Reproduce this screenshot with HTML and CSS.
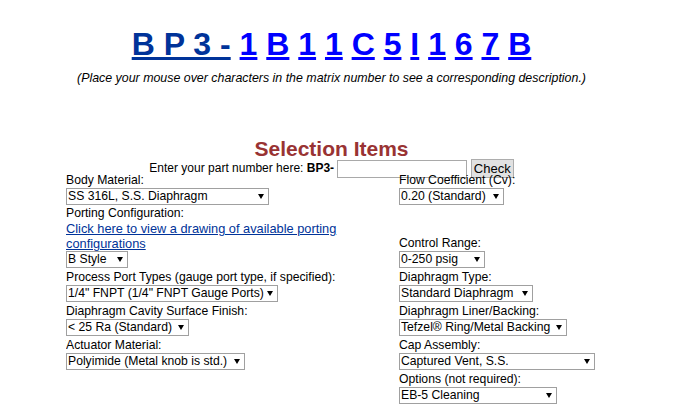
FILE: index.html
```html
<!DOCTYPE html>
<html>

	<head>
		<title>BP3 Series - Matrix Number</title>
		<link rel="stylesheet" href="styles.css">
	</head>

	<body>
		<div class="page">

			<div class="matrix">
				<span class="prefix">B P 3 -</span>
				<a href="#">1</a>
				<a href="#">B</a>
				<a href="#">1</a>
				<a href="#">1</a>
				<a href="#">C</a>
				<a href="#">5</a>
				<a href="#">I</a>
				<a href="#">1</a>
				<a href="#">6</a>
				<a href="#">7</a>
				<a href="#">B</a>
			</div>
			<p class="hint">(Place your mouse over characters in the matrix number to see a corresponding description.)</p>

			<h2 class="title">Selection Items</h2>
			<div class="lookup">
				Enter your part number here: <b>BP3-</b> <input type="text" class="part"> <input type="button" class="check" value="Check">
			</div>

			<table class="opts">
				<tr class="first">
					<td class="left">
						<div class="lbl">Body Material:</div>
						<span class="sel w-body"><select><option>SS 316L, S.S. Diaphragm</option><option>SS 316L, Elgiloy Diaphragm</option></select></span>
					</td>
					<td>
						<div class="lbl">Flow Coefficient (Cv):</div>
						<span class="sel w-flow"><select><option>0.20 (Standard)</option><option>0.06</option></select></span>
					</td>
				</tr>
				<tr>
					<td class="left">
						<div class="lbl">Porting Configuration:</div>
						<div class="lbl drawing"><a href="#">Click here to view a drawing of available porting configurations</a></div>
						<span class="sel w-port"><select><option>B Style</option><option>A Style</option></select></span>
					</td>
					<td class="bottom">
						<div class="lbl">Control Range:</div>
						<span class="sel w-range"><select><option>0-250 psig</option><option>0-100 psig</option></select></span>
					</td>
				</tr>
				<tr>
					<td class="left">
						<div class="lbl">Process Port Types (gauge port type, if specified):</div>
						<span class="sel w-proc"><select><option>1/4" FNPT (1/4" FNPT Gauge Ports)</option></select></span>
					</td>
					<td>
						<div class="lbl">Diaphragm Type:</div>
						<span class="sel w-dtype"><select><option>Standard Diaphragm</option></select></span>
					</td>
				</tr>
				<tr>
					<td class="left">
						<div class="lbl">Diaphragm Cavity Surface Finish:</div>
						<span class="sel w-cav"><select><option>&lt; 25 Ra (Standard)</option></select></span>
					</td>
					<td>
						<div class="lbl">Diaphragm Liner/Backing:</div>
						<span class="sel w-liner"><select><option>Tefzel&reg; Ring/Metal Backing</option></select></span>
					</td>
				</tr>
				<tr>
					<td class="left">
						<div class="lbl">Actuator Material:</div>
						<span class="sel w-act"><select><option>Polyimide (Metal knob is std.)</option></select></span>
					</td>
					<td>
						<div class="lbl">Cap Assembly:</div>
						<span class="sel w-cap"><select><option>Captured Vent, S.S.</option></select></span>
					</td>
				</tr>
				<tr>
					<td class="left"></td>
					<td>
						<div class="lbl">Options (not required):</div>
						<span class="sel w-opt"><select><option>EB-5 Cleaning</option><option>None</option></select></span>
					</td>
				</tr>
			</table>

		</div>
	</body>

</html>
```

FILE: styles.css
```css
body {
	margin: 8px;
	font-family: "Liberation Sans", Arial, sans-serif;
	font-size: 12.2px;
	color: #000000;
}

.page {
	width: 647px;
}

.matrix {
	margin-top: 18px;
	text-align: center;
	font-size: 32px;
	font-weight: bold;
	line-height: 37px;
}

.prefix {
	color: #003399;
	text-decoration: underline;
}

.matrix a {
	color: #0000ff;
}

p.hint {
	margin: 8px 0 0 0;
	text-align: center;
	font-style: italic;
	font-size: 12.4px;
	line-height: 14px;
}

h2.title {
	margin: 54px 0 0 0;
	color: #993333;
	text-align: center;
	font-size: 21px;
	line-height: 20px;
}

.lookup {
	height: 14px;
	text-align: center;
	font-size: 12px;
	line-height: 18px;
}

input.part {
	box-sizing: border-box;
	width: 130px;
	height: 18px;
	margin: 0;
	padding: 0 2px;
	border: 1px solid #a9a9a9;
	vertical-align: middle;
}

input.check {
	box-sizing: border-box;
	height: 19px;
	margin: 0;
	padding: 0 2px;
	background: #e1e1e1;
	border: 1px solid #adadad;
	font: 13px "Liberation Sans", Arial, sans-serif;
	color: #000000;
	vertical-align: middle;
}

table.opts {
	width: 535px;
	margin: 0 auto;
	border-collapse: collapse;
}

table.opts td {
	padding: 1px 2px;
	vertical-align: top;
}

table.opts tr.first td {
	padding-top: 0;
	padding-bottom: 0;
}

table.opts td.left {
	width: 329px;
}

table.opts td.bottom {
	vertical-align: bottom;
}

.lbl {
	line-height: 15px;
}

.lbl.drawing {
	font-size: 12.8px;
}

.drawing a {
	color: #003399;
}

.sel {
	position: relative;
	display: block;
	height: 17px;
}

.sel select {
	box-sizing: border-box;
	width: 100%;
	height: 17px;
	margin: 0;
	padding: 0 12px 0 1px;
	-webkit-appearance: none;
	appearance: none;
	border: 1px solid #a0a0a0;
	border-radius: 0;
	background: #ffffff;
	font: 12.2px "Liberation Sans", Arial, sans-serif;
	color: #000000;
	line-height: 15px;
}

.sel::after {
	content: "";
	position: absolute;
	right: 5px;
	top: 6px;
	border-left: 3px solid transparent;
	border-right: 3px solid transparent;
	border-top: 5px solid #000000;
	pointer-events: none;
}

.w-body { width: 203px; }
.w-port { width: 62px; }
.w-proc { width: 212px; }
.w-cav { width: 123px; }
.w-act { width: 179px; }
.w-flow { width: 105px; }
.w-range { width: 86px; }
.w-dtype { width: 134px; }
.w-liner { width: 168px; }
.w-cap { width: 196px; }
.w-opt { width: 158px; }
```
